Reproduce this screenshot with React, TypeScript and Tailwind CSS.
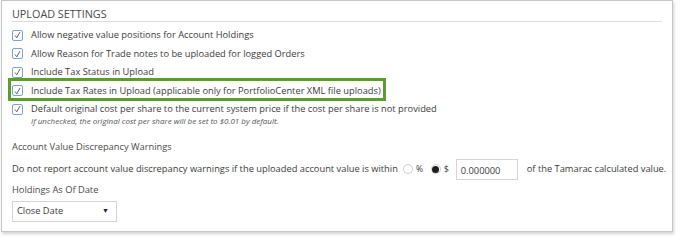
import React from 'react';

const options = [
    'Allow negative value positions for Account Holdings',
    'Allow Reason for Trade notes to be uploaded for logged Orders',
    'Include Tax Status in Upload',
    'Include Tax Rates in Upload (applicable only for PortfolioCenter XML file uploads)',
    'Default original cost per share to the current system price if the cost per share is not provided',
];

function CheckBox() {
    return (
        <span className="flex h-[11px] w-[11px] shrink-0 items-center justify-center rounded-[2px] border border-[#7aa3d6] bg-white">
            <svg width="7" height="8" viewBox="0 0 7 8" fill="none">
                <path d="M1 4.5 L2.8 6.8 L6 1" stroke="#555" strokeWidth="0.9" />
            </svg>
        </span>
    );
}

export default function App() {
    return (
        <div className="h-[242px] w-[683px] bg-white pl-[1px] pr-[10px] text-[#3c3c3c]" style={{ fontFamily: '"Open Sans", sans-serif' }}>
            <div className="h-[232px] border border-[#c6c6c6] bg-white px-[10px] shadow-[1px_2px_3px_rgba(0,0,0,0.18)]">
                {/* Heading */}
                <div className="flex h-[21px] items-end border-b border-[#dcdcdc] pb-[1px] text-[10.8px] leading-none text-[#4a4a4a]">
                    UPLOAD SETTINGS
                </div>

                <div className="mt-[4px]">
                    {options.map((label, i) => (
                        <div key={i} className="relative flex h-[18.5px] items-center gap-[8px] text-[9.3px]">
                            <CheckBox />
                            <span className="whitespace-nowrap">{label}</span>
                            {i === 3 && (
                                <div className="absolute left-[-4px] top-[-3.5px] h-[22.5px] w-[378px] border-[3px] border-[#5c9e2c]" />
                            )}
                        </div>
                    ))}
                    <div className="-mt-[3px] pl-[19px] text-[8px] italic leading-[9px] text-[#555]">
                        If unchecked, the original cost per share will be set to $0.01 by default.
                    </div>
                </div>

                <div className="mt-[16px] text-[9.3px] leading-[12px] text-[#4a4a4a]">Account Value Discrepancy Warnings</div>

                <div className="mt-[6px] flex h-[21px] items-center whitespace-nowrap text-[9.3px]">
                    <span>Do not report account value discrepancy warnings if the uploaded account value is within</span>
                    <span className="ml-[5px] h-[10px] w-[10px] shrink-0 rounded-full border border-[#cfcfcf] bg-white" />
                    <span className="ml-[3px] text-[8.5px]">%</span>
                    <span className="ml-[8px] flex h-[10px] w-[10px] shrink-0 items-center justify-center rounded-full border border-[#cfcfcf] bg-white">
                        <span className="h-[7px] w-[7px] rounded-full bg-[#1e1e1e]" />
                    </span>
                    <span className="ml-[3px] text-[8.5px]">$</span>
                    <div className="ml-[7px] flex h-[21px] w-[62px] shrink-0 items-end border border-[#d4d4d4] px-[4px] pb-[3px] leading-none">
                        0.000000
                    </div>
                    <span className="ml-[9px]">of the Tamarac calculated value.</span>
                </div>

                <div className="mt-[4px] text-[9.3px] leading-[12px] text-[#4a4a4a]">Holdings As Of Date</div>

                <div className="mt-[5px] flex h-[21px] w-[105px] items-center justify-between border border-[#d4d4d4] pl-[4px] pr-[7px] text-[9.3px]">
                    <span>Close Date</span>
                    <span className="text-[7px] text-[#222]">▼</span>
                </div>
            </div>
        </div>
    );
}
